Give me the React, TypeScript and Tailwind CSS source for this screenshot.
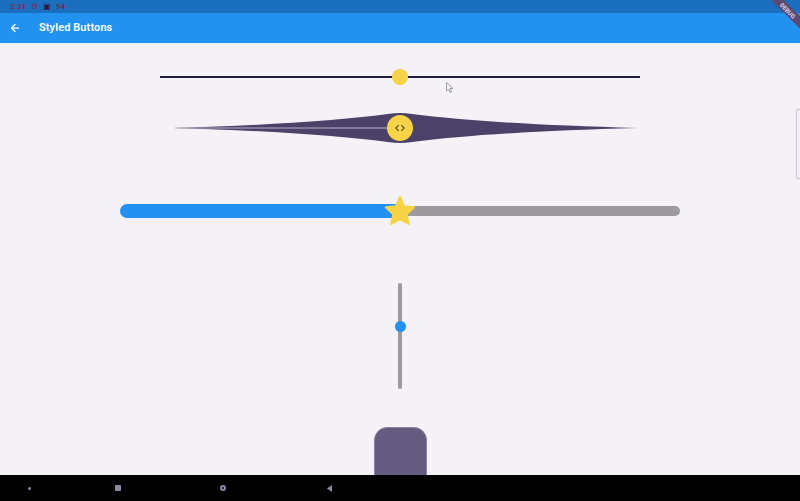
import { ArrowLeft, Code } from 'lucide-react';

function StatusBar() {
  return (
    <div className="h-[13px] shrink-0 bg-[#1b6fbf] flex items-center pl-[10px] gap-[5px] text-[8px] leading-none text-[#7a2b55]">
      <span className="font-bold">2:31</span>
      <span>⚙</span>
      <span className="text-[#3a1030]">▣</span>
      <span className="font-bold">94</span>
      <span className="text-[6px]">•</span>
    </div>
  );
}

function AppBar() {
  return (
    <div className="h-[30px] shrink-0 bg-[#2292f1] flex items-center text-white">
      <ArrowLeft className="ml-[9px] w-[12px] h-[12px]" strokeWidth={2.5} />
      <span className="ml-[18px] text-[11px] font-semibold tracking-[0.1px]">Styled Buttons</span>
    </div>
  );
}

function Star() {
  // 5 point star
  const pts: string[] = [];
  for (let i = 0; i < 10; i++) {
    const r = i % 2 === 0 ? 15 : 7;
    const a = -Math.PI / 2 + (i * Math.PI) / 5;
    pts.push(`${16 + r * Math.cos(a)},${17 + r * Math.sin(a)}`);
  }
  return (
    <svg width="32" height="32" viewBox="0 0 32 32">
      <polygon points={pts.join(' ')} fill="#f8d347" stroke="#f8d347" strokeWidth="2" strokeLinejoin="round" />
    </svg>
  );
}

export default function App() {
  return (
    <div className="w-[800px] h-[501px] flex flex-col overflow-hidden relative font-['Roboto',sans-serif] bg-[#f4f2f6]">
      <StatusBar />
      <AppBar />

      <div className="flex-1 min-h-0 overflow-hidden flex flex-col items-center">
        {/* thin slider */}
        <div className="shrink-0 mt-[26px] w-[480px] h-[16px] flex items-center justify-center relative">
          <div className="w-full h-[2px] bg-[#221d45]" />
          <div className="absolute left-[232px] top-0 w-[16px] h-[16px] rounded-full bg-[#f8d347]" />
        </div>

        {/* diamond slider */}
        <div className="shrink-0 mt-[27px] w-[480px] h-[32px] relative">
          <svg width="480" height="32" viewBox="0 0 480 32">
            <path
              d="M15 16 Q150 12 228 2 Q240 0 252 2 Q330 12 477 16 Q330 20 252 30 Q240 32 228 30 Q150 20 15 16 Z"
              fill="#4b4169"
            />
            <line x1="15" y1="16" x2="230" y2="16" stroke="#b9b3c4" strokeWidth="1" />
          </svg>
          <div className="absolute left-[227px] top-[3px] w-[26px] h-[26px] rounded-full bg-[#f8d347] flex items-center justify-center">
            <Code className="w-[10px] h-[10px] text-[#222]" strokeWidth={2.5} />
          </div>
        </div>

        {/* star slider */}
        <div className="shrink-0 mt-[52px] w-[560px] h-[30px] flex items-center relative">
          <div className="w-[280px] h-[14px] rounded-l-full bg-[#2391f1]" />
          <div className="flex-1 h-[10px] rounded-r-full bg-[#9e999f]" />
          <div className="absolute left-[264px] top-[-1px]">
            <Star />
          </div>
        </div>

        {/* vertical slider */}
        <div className="shrink-0 mt-[57px] w-[12px] h-[106px] flex justify-center relative">
          <div className="w-[4px] h-full rounded-full bg-[#9e999f]" />
          <div className="absolute left-[0.5px] top-[38px] w-[11px] h-[11px] rounded-full bg-[#2391f1]" />
        </div>

        {/* bottom knob */}
        <div className="shrink-0 mt-[38px] w-[53px] h-[60px] rounded-t-[13px] bg-[#645c80] border border-[#8a84a0]" />
      </div>

      {/* nav bar */}
      <div className="h-[26px] shrink-0 bg-black flex items-center relative">
        <div className="absolute left-[28px] top-[12px] w-[3px] h-[3px] rounded-full bg-[#8b87a6]" />
        <div className="absolute left-[115px] top-[10px] w-[6px] h-[6px] rounded-[1px] bg-[#8b87a6]" />
        <div className="absolute left-[220px] top-[10px] w-[6px] h-[6px] rounded-full border-[2px] border-[#8b87a6]" />
        <svg className="absolute left-[327px] top-[10px]" width="6" height="7" viewBox="0 0 6 7">
          <polygon points="5,0 5,7 0,3.5" fill="#8b87a6" />
        </svg>
      </div>

      {/* mouse cursor */}
      <svg className="absolute left-[446px] top-[82px]" width="8" height="11" viewBox="0 0 8 11">
        <path d="M0.5 0.5 L0.5 9 L2.5 7 L4 10.5 L5.5 9.8 L4 6.5 L7 6.5 Z" fill="#f3f2f6" stroke="#8a8790" strokeWidth="0.8" />
      </svg>

      {/* right edge scroll handle */}
      <div className="absolute right-0 top-[109px] w-[4px] h-[70px] border border-r-0 border-[#c9c6d2] rounded-l-[2px]" />

      {/* debug banner */}
      <div className="absolute right-[-16px] top-[6px] w-[56px] h-[9px] rotate-45 bg-[#5b4b74] flex items-center justify-center">
        <span className="text-[6px] font-bold text-[#d9d4e4] leading-none">DEBUG</span>
      </div>
    </div>
  );
}
